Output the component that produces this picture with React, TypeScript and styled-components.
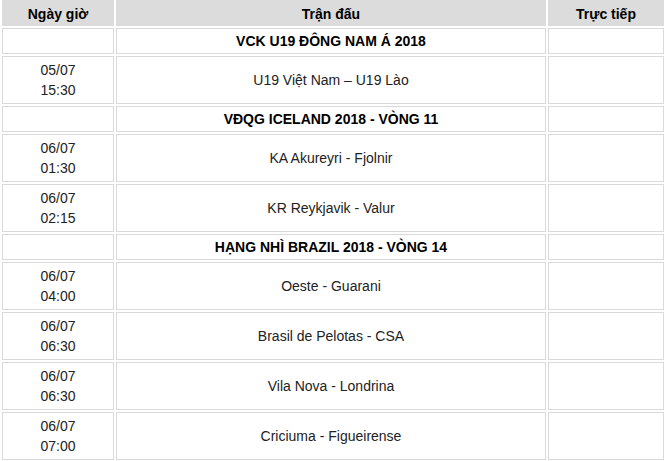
import React from "react";
import styled, { createGlobalStyle } from "styled-components";

const Global = createGlobalStyle`
  html, body { margin: 0; padding: 0; background: #fff; }
  body { font-family: "Liberation Sans", Arial, sans-serif; }
`;

const Table = styled.table`
  width: 666px;
  border-collapse: separate;
  border-spacing: 2px;
  table-layout: fixed;
  font-family: "Liberation Sans", Arial, sans-serif;
  font-size: 14px;
  color: #222;
  margin-top: -2px;
`;

const HeadCell = styled.th<{ $w: number }>`
  box-sizing: border-box;
  width: ${(p) => p.$w}px;
  height: 26px;
  padding: 1px 0 0;
  background: #dcdcdc;
  border: 1px solid #dcdcdc;
  font-weight: bold;
  font-size: 14px;
  color: #000;
  text-align: center;
  vertical-align: middle;
`;

const GroupCell = styled.td<{ $bold?: boolean }>`
  box-sizing: border-box;
  height: 26px;
  padding: 0;
  border: 1px solid #dadada;
  text-align: center;
  vertical-align: middle;
  font-weight: ${(p) => (p.$bold ? "bold" : "normal")};
  color: #000;
`;

const MatchCell = styled.td`
  box-sizing: border-box;
  height: 48px;
  padding: 0;
  border: 1px solid #dadada;
  text-align: center;
  vertical-align: middle;
  line-height: 20px;
  color: #222;
`;

type Match = { date: string; time: string; name: string };
type Group = { title: string; matches: Match[] };

const groups: Group[] = [
  {
    title: "VCK U19 ĐÔNG NAM Á 2018",
    matches: [{ date: "05/07", time: "15:30", name: "U19 Việt Nam – U19 Lào" }],
  },
  {
    title: "VĐQG ICELAND 2018 - VÒNG 11",
    matches: [
      { date: "06/07", time: "01:30", name: "KA Akureyri - Fjolnir" },
      { date: "06/07", time: "02:15", name: "KR Reykjavik - Valur" },
    ],
  },
  {
    title: "HẠNG NHÌ BRAZIL 2018 - VÒNG 14",
    matches: [
      { date: "06/07", time: "04:00", name: "Oeste - Guarani" },
      { date: "06/07", time: "06:30", name: "Brasil de Pelotas - CSA" },
      { date: "06/07", time: "06:30", name: "Vila Nova - Londrina" },
      { date: "06/07", time: "07:00", name: "Criciuma - Figueirense" },
    ],
  },
];

export default function App() {
  return (
    <>
      <Global />
      <Table>
        <thead>
          <tr>
            <HeadCell $w={112}>Ngày giờ</HeadCell>
            <HeadCell $w={430}>Trận đấu</HeadCell>
            <HeadCell $w={116}>Trực tiếp</HeadCell>
          </tr>
        </thead>
        <tbody>
          {groups.map((g) => (
            <React.Fragment key={g.title}>
              <tr>
                <GroupCell />
                <GroupCell $bold>{g.title}</GroupCell>
                <GroupCell />
              </tr>
              {g.matches.map((m, i) => (
                <tr key={i}>
                  <MatchCell>
                    {m.date}
                    <br />
                    {m.time}
                  </MatchCell>
                  <MatchCell>{m.name}</MatchCell>
                  <MatchCell />
                </tr>
              ))}
            </React.Fragment>
          ))}
        </tbody>
      </Table>
    </>
  );
}
